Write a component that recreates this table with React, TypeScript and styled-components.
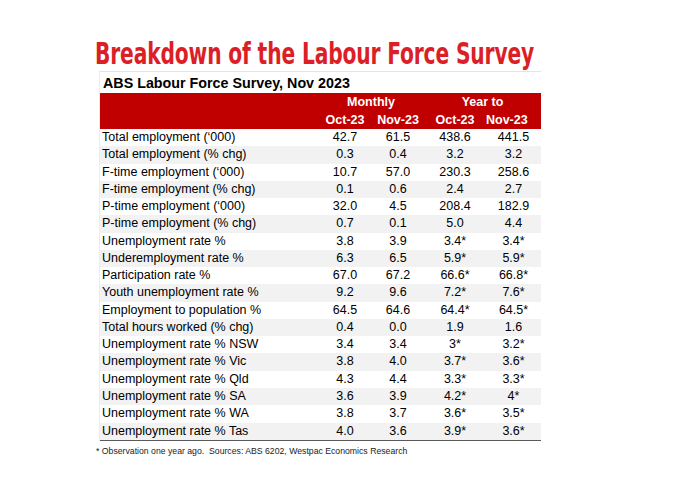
import React from 'react'
import styled, { createGlobalStyle } from 'styled-components';

const GlobalStyle = createGlobalStyle`
  body {
    margin: 0;
    background: #fff;
    font-family: 'Liberation Sans', Arial, sans-serif;
  }
`;

const COLS = '218px 54px 52px 62px 55px';

const Page = styled.div`
  width: 700px;
  height: 484px;
  padding: 36px 0 0 95px;
  box-sizing: border-box;
  display: flex;
  flex-direction: column;
  overflow: hidden;
`;

const Title = styled.h1`
  margin: 0;
  height: 35px;
  color: #dc1f26;
  font-family: 'DejaVu Sans Condensed', 'Liberation Sans', sans-serif;
  font-stretch: condensed;
  font-size: 30px;
  font-weight: 700;
  line-height: 35px;
  letter-spacing: -0.2px;
  white-space: nowrap;
  transform: scaleX(0.75);
  transform-origin: left center;
`;

const TableBox = styled.div`
  margin-left: 4px;
  width: 441px;
  border-top: 1px solid #e4e4e4;
  border-left: 1px solid #ececec;
`;

const Subtitle = styled.div`
  height: 21px;
  padding-left: 3px;
  color: #000;
  font-size: 14.3px;
  font-weight: 700;
  line-height: 22px;
  white-space: nowrap;
`;

const HeaderRow = styled.div`
  display: grid;
  grid-template-columns: ${COLS};
  height: 18px;
  background: #c00000;
  color: #fff;
  font-size: 12.5px;
  font-weight: 700;
  line-height: 18px;
`;

const HeadCell = styled.div<{ $span?: number; $shift?: number }>`
  grid-column: span ${p => p.$span || 1};
  text-align: center;
  padding-right: ${p => p.$shift || 0}px;
  white-space: nowrap;
`;

const Row = styled.div<{ $shade: boolean }>`
  display: grid;
  grid-template-columns: ${COLS};
  height: 17.28px;
  background: ${p => (p.$shade ? '#f2f2f2' : '#fff')};
  color: #000;
  font-size: 12.5px;
  line-height: 17.28px;
`;

const Label = styled.div`
  padding-left: 2px;
  white-space: nowrap;
`;

const Value = styled.div`
  text-align: center;
  white-space: nowrap;
`;

const BottomRule = styled.div`
  height: 1.5px;
  background: #5a5a5a;
`;

const Note = styled.div`
  margin-top: 5px;
  padding-left: 1px;
  color: #222;
  font-size: 8.7px;
  white-space: pre;
`;

const rows: [string, string, string, string, string][] = [
  ['Total employment (\u2018000)', '42.7', '61.5', '438.6', '441.5'],
  ['Total employment (% chg)', '0.3', '0.4', '3.2', '3.2'],
  ['F-time employment (\u2018000)', '10.7', '57.0', '230.3', '258.6'],
  ['F-time employment (% chg)', '0.1', '0.6', '2.4', '2.7'],
  ['P-time employment (\u2018000)', '32.0', '4.5', '208.4', '182.9'],
  ['P-time employment (% chg)', '0.7', '0.1', '5.0', '4.4'],
  ['Unemployment rate %', '3.8', '3.9', '3.4*', '3.4*'],
  ['Underemployment rate %', '6.3', '6.5', '5.9*', '5.9*'],
  ['Participation rate %', '67.0', '67.2', '66.6*', '66.8*'],
  ['Youth unemployment rate %', '9.2', '9.6', '7.2*', '7.6*'],
  ['Employment to population %', '64.5', '64.6', '64.4*', '64.5*'],
  ['Total hours worked (% chg)', '0.4', '0.0', '1.9', '1.6'],
  ['Unemployment rate % NSW', '3.4', '3.4', '3*', '3.2*'],
  ['Unemployment rate % Vic', '3.8', '4.0', '3.7*', '3.6*'],
  ['Unemployment rate % Qld', '4.3', '4.4', '3.3*', '3.3*'],
  ['Unemployment rate % SA', '3.6', '3.9', '4.2*', '4*'],
  ['Unemployment rate % WA', '3.8', '3.7', '3.6*', '3.5*'],
  ['Unemployment rate % Tas', '4.0', '3.6', '3.9*', '3.6*'],
];

function App() {
  return (
    <>
      <GlobalStyle />
      <Page>
        <Title>Breakdown of the Labour Force Survey</Title>
        <TableBox>
          <Subtitle>ABS Labour Force Survey, Nov 2023</Subtitle>
          <HeaderRow>
            <HeadCell />
            <HeadCell $span={2}>Monthly</HeadCell>
            <HeadCell $span={2}>Year to</HeadCell>
          </HeaderRow>
          <HeaderRow>
            <HeadCell />
            <HeadCell>Oct-23</HeadCell>
            <HeadCell>Nov-23</HeadCell>
            <HeadCell>Oct-23</HeadCell>
            <HeadCell $shift={14}>Nov-23</HeadCell>
          </HeaderRow>
          {rows.map((r, i) => (
            <Row key={r[0]} $shade={i % 2 === 1}>
              <Label>{r[0]}</Label>
              <Value>{r[1]}</Value>
              <Value>{r[2]}</Value>
              <Value>{r[3]}</Value>
              <Value>{r[4]}</Value>
            </Row>
          ))}
          <BottomRule />
        </TableBox>
        <Note>{'* Observation one year ago.  Sources: ABS 6202, Westpac Economics Research'}</Note>
      </Page>
    </>
  )
}

export default App
